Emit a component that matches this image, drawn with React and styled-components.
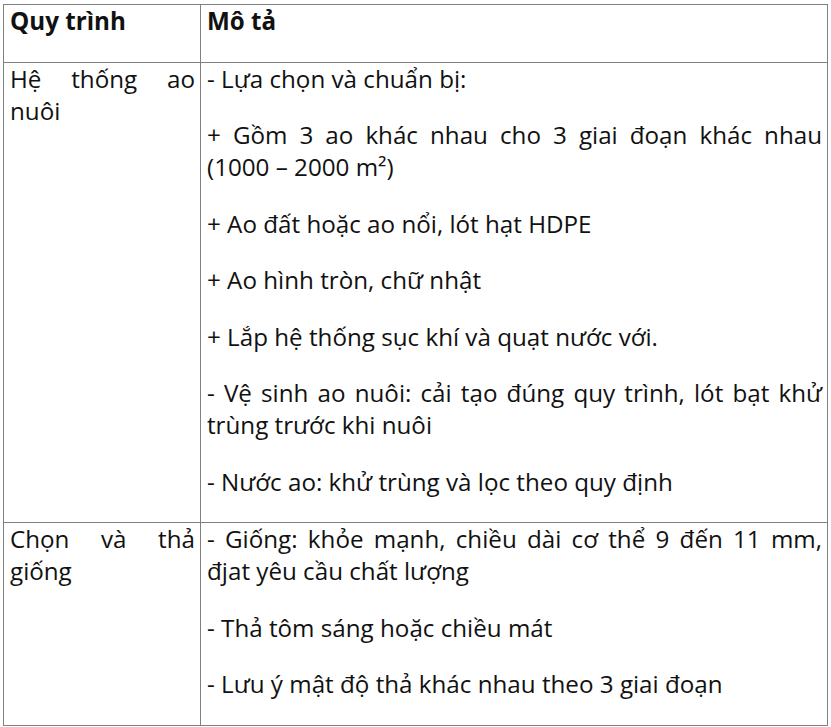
import React from "react";
import styled, { createGlobalStyle } from "styled-components";

const GlobalStyle = createGlobalStyle`
  body {
    margin: 0;
    background: #fff;
    font-family: "Open Sans", "Noto Sans", sans-serif;
    color: #111;
  }
`;

const rows = [
  {
    step: "Hệ thống ao nuôi",
    items: [
      "- Lựa chọn và chuẩn bị:",
      "+ Gồm 3 ao khác nhau cho 3 giai đoạn khác nhau (1000 – 2000 m²)",
      "+ Ao đất hoặc ao nổi, lót hạt HDPE",
      "+ Ao hình tròn, chữ nhật",
      "+ Lắp hệ thống sục khí và quạt nước với.",
      "- Vệ sinh ao nuôi: cải tạo đúng quy trình, lót bạt khử trùng trước khi nuôi",
      "- Nước ao: khử trùng và lọc theo quy định",
    ],
  },
  {
    step: "Chọn và thả giống",
    items: [
      "- Giống: khỏe mạnh, chiều dài cơ thể 9 đến 11 mm, đjat yêu cầu chất lượng",
      "- Thả tôm sáng hoặc chiều mát",
      "- Lưu ý mật độ thả khác nhau theo 3 giai đoạn",
    ],
  },
];

const Page = styled.div`
  padding: 4px 0 0 3px;
`;

const Table = styled.table`
  width: 825px;
  border-collapse: collapse;
  table-layout: fixed;
  font-size: 24.2px;
  line-height: 32px;
`;

const Cell = styled.td`
  box-sizing: border-box;
  width: ${({ $w }) => $w || "auto"};
  border: 1px solid #808080;
  padding: 0 5px 0 6px;
  vertical-align: top;
  text-align: justify;
`;

const Para = styled.p`
  margin: 0 0 24.5px;
  font-weight: ${({ $bold }) => ($bold ? 700 : 400)};
`;

export default function App() {
  return (
    <Page>
      <GlobalStyle />
      <Table>
        <tbody>
          <tr>
            <Cell $w="197px">
              <Para $bold>Quy trình</Para>
            </Cell>
            <Cell>
              <Para $bold>Mô tả</Para>
            </Cell>
          </tr>
          {rows.map((row) => (
            <tr key={row.step}>
              <Cell>
                <Para>{row.step}</Para>
              </Cell>
              <Cell>
                {row.items.map((t) => (
                  <Para key={t}>{t}</Para>
                ))}
              </Cell>
            </tr>
          ))}
        </tbody>
      </Table>
    </Page>
  );
}
